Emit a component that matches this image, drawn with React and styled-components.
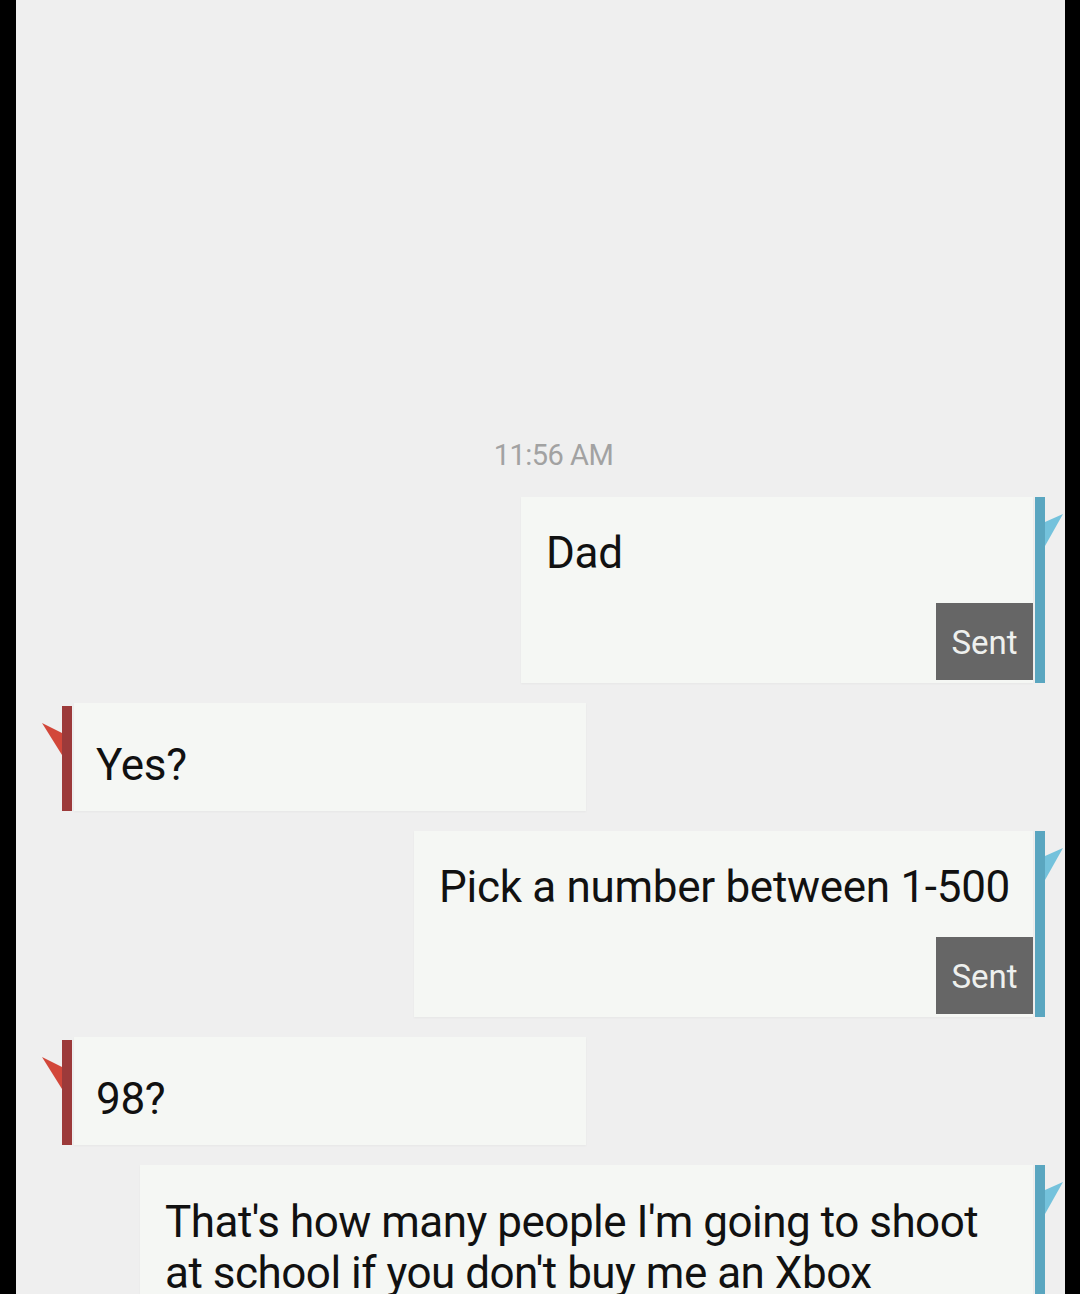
import React from "react";
import styled, { createGlobalStyle } from "styled-components";

const Global = createGlobalStyle`
  html, body { margin: 0; padding: 0; background: #000; }
  body { font-family: Roboto, "Noto Sans", "Liberation Sans", sans-serif; }
`;

const Frame = styled.div`
  width: 1080px;
  height: 1294px;
  background: #000;
  padding: 0 15px 0 16px;
  box-sizing: border-box;
  overflow: hidden;
`;

const Screen = styled.div`
  height: 100%;
  background: #efefef;
  padding-top: 438px;
  box-sizing: border-box;
  display: flex;
  flex-direction: column;
  gap: 20px;
`;

const Stamp = styled.div`
  text-align: center;
  font-size: 29px;
  line-height: 34px;
  color: #a2a2a2;
  margin-bottom: 5px;
  padding-left: 26px;
  letter-spacing: -0.5px;
`;

const Row = styled.div`
  display: flex;
  align-items: stretch;
  justify-content: ${(p) => (p.$out ? "flex-end" : "flex-start")};
  padding: ${(p) => (p.$out ? "0 20px 0 0" : "0 0 0 46px")};
`;

const Bubble = styled.div`
  background: #f5f7f4;
  box-sizing: border-box;
  min-width: 512px;
  max-width: 893px;
  display: flex;
  flex-direction: column;
  padding: ${(p) => (p.$out ? "32px 0 3px 25px" : "38px 24px 22px 22px")};
  margin: ${(p) => (p.$out ? "0 2px 0 0" : "0 0 0 2px")};
  box-shadow: 0 1px 2px rgba(0, 0, 0, 0.04);
`;

const Text = styled.div`
  font-size: ${(p) => p.$size || 44}px;
  line-height: ${(p) => p.$lh || 48}px;
  color: #111;
  padding-right: ${(p) => (p.$out ? "23px" : "0")};
  letter-spacing: ${(p) => p.$ls || "-0.3px"};
`;

const Sent = styled.div`
  align-self: flex-end;
  margin-top: 26px;
  width: 97px;
  height: 77px;
  background: #666;
  color: #eef0ee;
  font-size: 33px;
  display: flex;
  align-items: center;
  justify-content: center;
  box-sizing: border-box;
  padding-top: 2px;
`;

const Bar = styled.div`
  position: relative;
  width: 10px;
  flex: none;
  background: ${(p) => (p.$out ? "#5aa6c0" : "#9c3a3a")};
  margin-top: ${(p) => (p.$out ? "0" : "3px")};
`;

const Tail = styled.svg`
  position: absolute;
  top: 17px;
  ${(p) => (p.$out ? "left: 10px;" : "right: 10px;")}
  width: 20px;
  height: 34px;
  overflow: visible;
`;

function OutBar() {
  return (
    <Bar $out>
      <Tail $out viewBox="0 0 20 34">
        <polygon points="0,8 0,32 18,0" fill="#74c2dc" />
      </Tail>
    </Bar>
  );
}

function InBar() {
  return (
    <Bar>
      <Tail viewBox="0 0 20 34">
        <polygon points="20,10 20,32 0,0" fill="#d2473a" />
      </Tail>
    </Bar>
  );
}

export default function App() {
  return (
    <>
      <Global />
      <Frame>
        <Screen>
          <Stamp>11:56 AM</Stamp>
          <Row $out>
            <Bubble $out>
              <Text $out>Dad</Text>
              <Sent>Sent</Sent>
            </Bubble>
            <OutBar />
          </Row>
          <Row>
            <InBar />
            <Bubble>
              <Text>Yes?</Text>
            </Bubble>
          </Row>
          <Row $out>
            <Bubble $out>
              <Text $out>Pick a number between 1-500</Text>
              <Sent>Sent</Sent>
            </Bubble>
            <OutBar />
          </Row>
          <Row>
            <InBar />
            <Bubble>
              <Text>98?</Text>
            </Bubble>
          </Row>
          <Row $out>
            <Bubble $out>
              <Text $out $size={44} $lh={51} $ls="-0.5px">
                That's how many people I'm going to shoot at school if you don't buy me an Xbox
              </Text>
            </Bubble>
            <OutBar />
          </Row>
        </Screen>
      </Frame>
    </>
  );
}
